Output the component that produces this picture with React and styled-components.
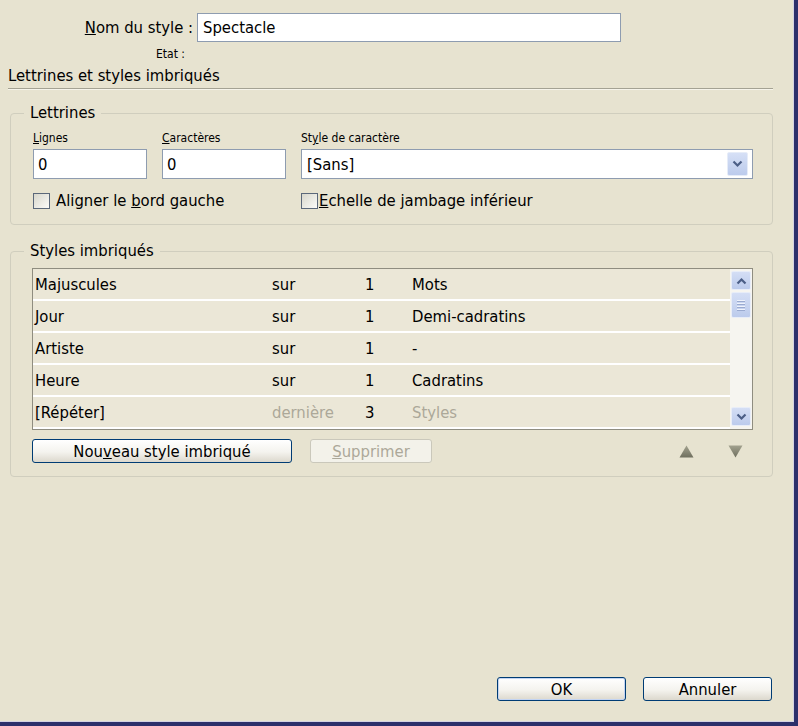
import React from 'react';
import styled, { createGlobalStyle } from 'styled-components';

const GlobalStyle = createGlobalStyle`
  html, body {
    margin: 0;
    padding: 0;
    background: #e7e3d0;
  }
  body {
    font-family: "DejaVu Sans Condensed", "DejaVu Sans", sans-serif;
    font-stretch: semi-condensed;
  }
  * { box-sizing: border-box; }
`;

const Frame = styled.div`
  width: 798px;
  height: 726px;
  display: flex;
  flex-direction: column;
  padding: 13px 21px 0 8px;
  background: #e7e3d0;
  border-right: 4px solid #2c2f6b;
  border-bottom: 4px solid #2c2f6b;
  box-shadow: inset -1px -1px 0 #d3d1e2;
  font-size: 16.5px;
  color: #000;
`;

const NameRow = styled.div`
  display: flex;
  align-items: center;
  gap: 4px;
`;

const NameLabel = styled.label`
  width: 185px;
  text-align: right;
`;

const Box = styled.div`
  width: ${p => (p.$w ? `${p.$w}px` : 'auto')};
  height: ${p => p.$h || 30}px;
  display: flex;
  align-items: center;
  padding: 0 ${p => p.$pad || 4}px;
  background: #fff;
  border: 1px solid #8e9cb0;
  white-space: nowrap;
`;

const Small = styled.div`
  font-size: 12px;
  line-height: 14px;
  padding-left: ${p => p.$indent || 0}px;
  margin-top: ${p => p.$top || 0}px;
`;

const SectionTitle = styled.div`
  margin-top: 5px;
  line-height: 20px;
`;

const Rule = styled.div`
  margin-top: 2px;
  border-top: 1px solid #a4a293;
  border-bottom: 1px solid #f6f4ea;
`;

const Group = styled.fieldset`
  margin: ${p => p.$top}px 0 0 2px;
  padding: 0;
  min-width: 0;
  border: 1px solid #d0cebe;
  border-radius: 4px;
`;

const Legend = styled.legend`
  margin-left: 13px;
  padding: 0 6px;
  line-height: 20px;
`;

const GroupBody = styled.div`
  padding: ${p => p.$pad};
`;

const FieldGrid = styled.div`
  display: grid;
  grid-template-columns: 114px 124px 1fr;
  column-gap: 15px;
  margin-top: ${p => p.$top || 0}px;
`;

const Field = styled.div`
  display: flex;
  flex-direction: column;
  gap: 4px;
`;

const SelectButton = styled.div`
  width: 21px;
  height: 24px;
  margin-left: auto;
  margin-right: -1px;
  display: flex;
  align-items: center;
  justify-content: center;
  background: linear-gradient(#d6e0f6, #bccbec);
  border: 1px solid #e6ecf8;
  border-radius: 2px;
`;

const Check = styled.label`
  grid-column: ${p => p.$col};
  display: flex;
  align-items: center;
  gap: ${p => p.$gap}px;
  line-height: 18px;
`;

const CheckBox = styled.span`
  width: 17px;
  height: 16px;
  border: 1px solid #5b687a;
  background: linear-gradient(135deg, #d8d7cc, #fbfbf8);
`;

const List = styled.div`
  display: flex;
  height: 162px;
  border: 1px solid #8f8d80;
  background: #fff;
`;

const Rows = styled.div`
  flex: 1;
`;

const Row = styled.div`
  display: grid;
  grid-template-columns: 237px 93px 47px 1fr;
  align-items: center;
  height: 32px;
  padding-left: 2px;
  background: #ebe7d7;
  border-bottom: 2px solid #fff;
`;

const Cell = styled.span`
  color: ${p => (p.$dim ? '#aca899' : '#000')};
`;

const Scrollbar = styled.div`
  width: 22px;
  display: flex;
  flex-direction: column;
  padding: 2px 1px 3px 1px;
  background: #f6f5f0;
`;

const ScrollButton = styled.div`
  height: 19px;
  margin-top: ${p => (p.$end ? 'auto' : '0')};
  display: flex;
  align-items: center;
  justify-content: center;
  background: linear-gradient(#d4def5, #bccbec);
  border: 1px solid #e8edf8;
  border-radius: 2px;
`;

const Thumb = styled(ScrollButton)`
  height: 26px;
  margin-top: 2px;
  flex-direction: column;
  gap: 2px;
`;

const Grip = styled.span`
  width: 8px;
  height: 1px;
  background: #eef2fb;
  box-shadow: 0 1px 0 #9aaad0;
`;

const ActionRow = styled.div`
  display: flex;
  align-items: center;
  margin-top: 9px;
  padding-right: 10px;
`;

const Button = styled.button`
  width: ${p => p.$w}px;
  height: 24px;
  margin-left: ${p => p.$left || 0}px;
  padding: 0;
  font: inherit;
  font-size: 16.5px;
  color: ${p => (p.disabled ? '#aca899' : '#000')};
  border: 1px solid ${p => (p.disabled ? '#cac8bb' : '#003c74')};
  border-radius: 3px;
  background: ${p =>
    p.disabled ? '#f3f2ea' : 'linear-gradient(#ffffff, #f4f3ee 55%, #dcd8cd)'};
  box-shadow: ${p => (p.$primary ? 'inset 0 0 0 1px #c3d4f2' : 'none')};
`;

const Arrows = styled.div`
  margin-left: auto;
  display: flex;
  gap: 34px;
`;

const Footer = styled.div`
  margin-top: auto;
  display: flex;
  justify-content: flex-end;
  gap: 17px;
  padding: 0 1px 21px 0;
`;

const Chevron = ({ up }) => (
  <svg width="11" height="8" viewBox="0 0 11 8">
    <path
      d={up ? 'M1.5 6.5 L5.5 2.5 L9.5 6.5' : 'M1.5 1.5 L5.5 5.5 L9.5 1.5'}
      fill="none"
      stroke="#4b5e86"
      strokeWidth="2.2"
    />
  </svg>
);

const Triangle = ({ up }) => (
  <svg width="15" height="13" viewBox="0 0 15 13">
    <defs>
      <linearGradient id={up ? 'tu' : 'td'} x1="0" y1="0" x2="0" y2="1">
        <stop offset="0" stopColor="#a3a28f" />
        <stop offset="1" stopColor="#6f6f5e" />
      </linearGradient>
    </defs>
    <polygon points={up ? '7.5,0.5 14.5,12.5 0.5,12.5' : '0.5,0.5 14.5,0.5 7.5,12.5'} fill={`url(#${up ? 'tu' : 'td'})`} />
  </svg>
);

const nested = [
  ['Majuscules', 'sur', '1', 'Mots'],
  ['Jour', 'sur', '1', 'Demi-cadratins'],
  ['Artiste', 'sur', '1', '-'],
  ['Heure', 'sur', '1', 'Cadratins'],
  ['[Répéter]', 'dernière', '3', 'Styles', true],
];

export default function App() {
  return (
    <>
      <GlobalStyle />
      <Frame>
        <NameRow>
          <NameLabel><u>N</u>om du style :</NameLabel>
          <Box $w={424} $h={29} $pad={5}>Spectacle</Box>
        </NameRow>
        <Small $indent={148} $top={5}>Etat :</Small>
        <SectionTitle>Lettrines et styles imbriqués</SectionTitle>
        <Rule />

        <Group $top={13}>
          <Legend>Lettrines</Legend>
          <GroupBody $pad="8px 19px 14px 22px">
            <FieldGrid>
              <Field>
                <Small><u>L</u>ignes</Small>
                <Box>0</Box>
              </Field>
              <Field>
                <Small><u>C</u>aractères</Small>
                <Box>0</Box>
              </Field>
              <Field>
                <Small>St<u>y</u>le de caractère</Small>
                <Box $pad={5}>
                  [Sans]
                  <SelectButton><Chevron /></SelectButton>
                </Box>
              </Field>
            </FieldGrid>
            <FieldGrid $top={13}>
              <Check $col="1 / span 2" $gap={6}>
                <CheckBox />
                <span>Aligner le <u>b</u>ord gauche</span>
              </Check>
              <Check $col="3" $gap={1}>
                <CheckBox />
                <span><u>E</u>chelle de jambage inférieur</span>
              </Check>
            </FieldGrid>
          </GroupBody>
        </Group>

        <Group $top={16}>
          <Legend>Styles imbriqués</Legend>
          <GroupBody $pad="7px 19px 13px 21px">
            <List>
              <Rows>
                {nested.map(([name, how, count, unit, last]) => (
                  <Row key={name}>
                    <Cell>{name}</Cell>
                    <Cell $dim={last}>{how}</Cell>
                    <Cell>{count}</Cell>
                    <Cell $dim={last}>{unit}</Cell>
                  </Row>
                ))}
              </Rows>
              <Scrollbar>
                <ScrollButton><Chevron up /></ScrollButton>
                <Thumb>
                  <Grip />
                  <Grip />
                  <Grip />
                  <Grip />
                </Thumb>
                <ScrollButton $end><Chevron /></ScrollButton>
              </Scrollbar>
            </List>
            <ActionRow>
              <Button $w={260}>Nou<u>v</u>eau style imbriqué</Button>
              <Button $w={122} $left={18} disabled><u>S</u>upprimer</Button>
              <Arrows>
                <Triangle up />
                <Triangle />
              </Arrows>
            </ActionRow>
          </GroupBody>
        </Group>

        <Footer>
          <Button $w={129} $primary>OK</Button>
          <Button $w={129}>Annuler</Button>
        </Footer>
      </Frame>
    </>
  );
}
